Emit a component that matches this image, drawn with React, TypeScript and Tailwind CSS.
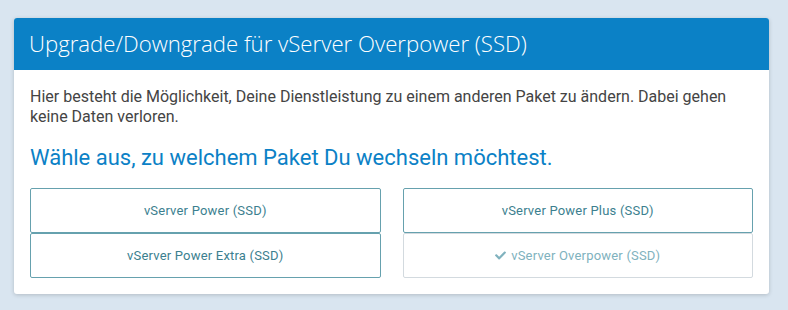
import React from "react";
import { FaCheck } from "react-icons/fa";

const options = [
  { label: "vServer Power (SSD)", current: false },
  { label: "vServer Power Plus (SSD)", current: false },
  { label: "vServer Power Extra (SSD)", current: false },
  { label: "vServer Overpower (SSD)", current: true },
];

export default function App() {
  return (
    <div className="min-h-[310px] w-full bg-[#d9e5f0] pt-[18px] pl-[14px] pr-[19px] pb-4">
      <div className="w-[755px] overflow-hidden rounded-[3px] bg-white shadow-[0_1px_4px_rgba(0,0,0,0.18)]">
        <div className="flex h-[52px] items-center bg-[#0b81c6] px-[15px]">
          <h1 className="text-[22.2px] font-light text-white [font-family:'Open_Sans',sans-serif] leading-none">
            Upgrade/Downgrade für vServer Overpower (SSD)
          </h1>
        </div>
        <div className="px-4 pt-[17px] pb-4 [font-family:Roboto,sans-serif]">
          <p className="text-[16px] leading-5 text-[#444444]">
            Hier besteht die Möglichkeit, Deine Dienstleistung zu einem anderen Paket zu ändern. Dabei gehen keine
            Daten verloren.
          </p>
          <h2 className="mt-[17px] text-[22px] leading-7 text-[#0b81c6]">
            Wähle aus, zu welchem Paket Du wechseln möchtest.
          </h2>
          <div className="mt-4 grid grid-cols-2 gap-x-[22px]">
            {options.map((o) => (
              <button
                key={o.label}
                className={
                  o.current
                    ? "flex h-[45px] items-center justify-center gap-[5px] rounded-[2px] border border-[#d3dadf] bg-white text-[13px] tracking-[0.2px] text-[#80b2be]"
                    : "flex h-[45px] items-center justify-center rounded-[2px] border border-[#66a1ae] bg-white text-[13px] tracking-[0.2px] text-[#3c7f8f]"
                }
              >
                {o.current && <FaCheck className="h-[11px] w-[11px] text-[#80b2be]" />}
                {o.label}
              </button>
            ))}
          </div>
        </div>
      </div>
    </div>
  );
}
